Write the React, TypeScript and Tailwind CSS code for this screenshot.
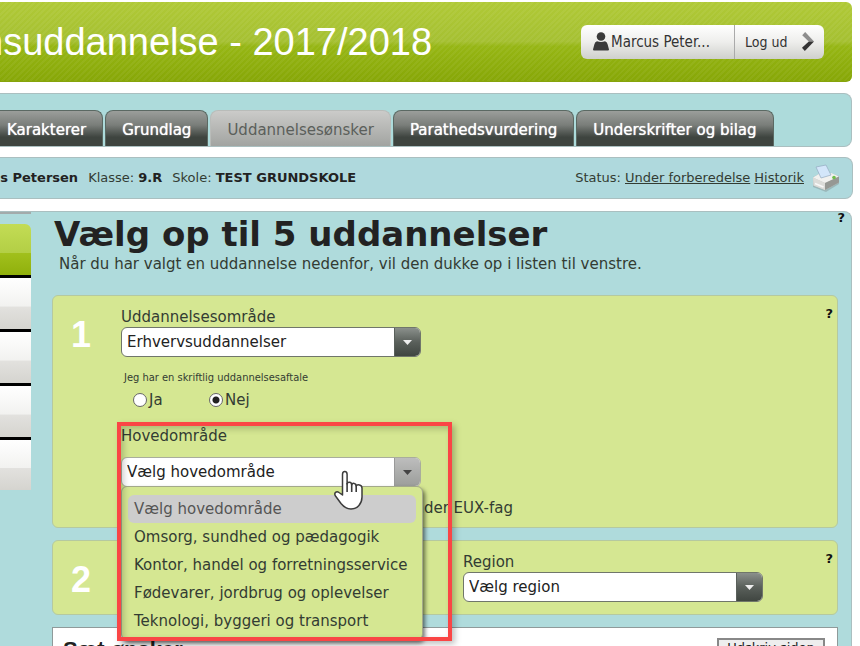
import { useState } from "react";
import type { ReactNode } from "react";

const TABS = [
  "Karakterer",
  "Grundlag",
  "Uddannelsesønsker",
  "Parathedsvurdering",
  "Underskrifter og bilag",
];

const AREAS = [
  "Vælg hovedområde",
  "Omsorg, sundhed og pædagogik",
  "Kontor, handel og forretningsservice",
  "Fødevarer, jordbrug og oplevelser",
  "Teknologi, byggeri og transport",
];

interface SelectBoxProps {
  id: string;
  options: string[];
  open?: boolean;
}

/** Drop-down with a separate arrow block on the right */
const SelectBox = ({ id, options, open = false }: SelectBoxProps) => (
  <div
    className={`grid w-[300px] h-[30px] rounded-md border overflow-hidden bg-white ${
      open ? "border-[#a9ad9c]" : "border-[#70766a]"
    }`}
  >
    <select
      id={id}
      className="col-start-1 row-start-1 w-full h-full appearance-none bg-transparent pl-[5px] pr-8 text-[15px] text-[#222] outline-none"
    >
      {options.map((option) => (
        <option key={option}>{option}</option>
      ))}
    </select>
    <span
      className={`col-start-1 row-start-1 justify-self-end w-[26px] flex items-center justify-center pointer-events-none border-l ${
        open
          ? "bg-linear-to-b from-[#bdbdbd] to-[#9c9e9b] border-[#999]"
          : "bg-linear-to-b from-[#8b908c] via-[#5a605b] to-[#404641] border-[#5a605b]"
      }`}
    >
      <svg width="9" height="5" viewBox="0 0 9 5" className={open ? "fill-[#444]" : "fill-[#eee]"}>
        <path d="M0 0h9L4.5 5z" />
      </svg>
    </span>
  </div>
);

interface StepProps {
  number: number;
  className: string;
  children: ReactNode;
}

const Step = ({ number, className, children }: StepProps) => (
  <section
    className={`relative flex bg-[#d5e792] border border-[#b5c9a0] rounded-md pt-[11px] ${className}`}
  >
    <div className="w-[68px] shrink-0 pl-[18px] pt-2 font-['Liberation_Sans',sans-serif] font-bold text-[36px] leading-10 text-white">
      {number}
    </div>
    {children}
    <HelpButton className="absolute right-1 top-2" />
  </section>
);

const HelpButton = ({ className }: { className: string }) => (
  <button
    type="button"
    aria-label="Hjælp"
    className={`font-bold text-[13px] leading-5 text-[#111] ${className}`}
  >
    ?
  </button>
);

const UserIcon = () => (
  <svg width="16" height="19" viewBox="0 0 16 19" fill="#3a3a3a">
    <circle cx="8" cy="4.5" r="4.3" />
    <path d="M4 9.2q4 1.6 8 0 2 .6 2.6 3L16 17.5q0 1-1 1H1q-1 0-1-1l1.4-5.3q.6-2.4 2.6-3z" />
  </svg>
);

const ChevronIcon = () => (
  <svg width="12" height="19" viewBox="0 0 12 19">
    <path d="M3.2 0 12 9.5H6.8L.2 3.2z" fill="#8d8d8d" />
    <path d="M12 9.5 2.8 19 0 15.8l6.8-6.3z" fill="#333" />
  </svg>
);

const PrinterIcon = () => (
  <svg width="28" height="28" viewBox="0 0 28 28">
    <path d="M1 13 12 8l15 4v8L14 28 1 23z" fill="#7e8686" opacity=".4" />
    <path d="M1 13.500 7 10l12-1 8 3.500v6L13 26 1.500 21.500z" fill="#c9cac7" />
    <path d="M1 13.500 7 10l12-1 8 3.500L13 19z" fill="#f1f1ef" />
    <path d="M4 3 14 1l5 10-10 3z" fill="#d3e6fa" stroke="#93abc0" strokeWidth=".7" />
    <path d="m1 13.500 12 5.500v7L1.500 21.500z" fill="#dcdcd9" />
    <path d="m13 19 14-6.500v6L13 26z" fill="#969894" />
    <path d="m3 19.500 8.500 3.500" stroke="#f8f8f8" strokeWidth="1.500" />
    <circle cx="22" cy="13.500" r="1.800" fill="#6fbd4c" />
  </svg>
);

const HandCursor = () => (
  <svg
    width="30"
    height="41"
    viewBox="0 0 30 41"
    className="absolute left-[281px] top-[174px] z-30 pointer-events-none"
  >
    <path
      d="M8.500 25V4.500c0-4 4.600-4 4.600 0V14c.3-2.600 4.600-2.400 4.600.8.6-2.300 4.500-1.800 4.500 1.200.8-2.100 5.800-1.400 5.800 2V27c0 6.500-4.500 12-11 12-5 0-7.500-2.500-10-5.500L1.500 26c-2-3.200 1-5.400 3.500-3.500z"
      fill="#fff"
      stroke="#3c3c3c"
      strokeWidth="1.500"
      strokeLinejoin="round"
    />
    <path d="M13.100 13v9M17.700 14v8M22.200 15v7" stroke="#3c3c3c" strokeWidth="1.600" />
  </svg>
);

const Radio = ({ label, checked, onChange }: { label: string; checked: boolean; onChange: () => void }) => (
  <label className="flex items-center gap-0.5 w-[76px] text-[15px] leading-5">
    <input
      type="radio"
      name="aftale"
      checked={checked}
      onChange={onChange}
      className="appearance-none size-[14px] rounded-full border border-[#666] bg-white checked:bg-[radial-gradient(circle,#222_3px,#fff_4px)]"
    />
    {label}
  </label>
);

const Header = () => (
  <header className="mt-0.5 mr-2 h-20 shrink-0 flex items-center justify-between rounded-r-md border-b border-[#86a40c] bg-[repeating-linear-gradient(135deg,rgba(255,255,255,0.05)_0_2px,transparent_2px_4px),linear-gradient(#b0c936_0%,#a5c032_50%,#96b614_56%,#87a707_100%)]">
    <h1 className="-ml-[18px] whitespace-nowrap font-['Liberation_Sans',sans-serif] text-[38px] leading-10 text-white">
      nsuddannelse - 2017/2018
    </h1>
    <div className="flex h-[34px] mr-7 rounded-md overflow-hidden bg-linear-to-b from-white via-[#eeeeec] to-[#cfd0cc] font-['DejaVu_Sans_Condensed','DejaVu_Sans',sans-serif] text-[#333]">
      <button type="button" className="flex items-center gap-0.5 pl-3 w-[153px] text-[15px]">
        <UserIcon />
        Marcus Peter...
      </button>
      <button
        type="button"
        className="flex items-center justify-between w-[90px] pl-2.5 pr-2.5 border-l border-[#aaa] text-[14px]"
      >
        Log ud
        <ChevronIcon />
      </button>
    </div>
  </header>
);

const App = () => {
  const [agreement, setAgreement] = useState(false);
  const [area, setArea] = useState(AREAS[0]);

  return (
    <div className="h-screen overflow-hidden flex flex-col bg-white font-['DejaVu_Sans',sans-serif] text-[15px] leading-5 text-[#333c33]">
      <Header />

      <nav className="mt-[11px] mr-2 shrink-0 pt-4 rounded-r-lg border border-l-0 border-[#aabfc0] bg-[#addbdb]">
        <div className="flex gap-0.5 -ml-[10px] whitespace-nowrap">
          {TABS.map((tab) => (
            <a
              key={tab}
              href="#"
              className={`px-4 h-9 leading-[38px] rounded-t-lg border border-b-0 ${
                tab === "Uddannelsesønsker"
                  ? "text-[#5b5f5b] border-[#b9bcb9] bg-linear-to-b from-[#cbcbc9] to-[#a2a4a1]"
                  : "text-white [text-shadow:0_0_1px_#fff] border-[#5b6963] bg-linear-to-b from-[#9b9e9b] via-[#7a7e7a] via-40% to-[#3e443f] to-75%"
              }`}
            >
              {tab}
            </a>
          ))}
        </div>
      </nav>

      <div className="mt-2.5 mr-[7px] h-[42px] shrink-0 flex items-center justify-between rounded-r-lg border border-l-0 border-[#aabfc0] bg-[#afd9dd] text-[13px] whitespace-nowrap">
        <p className="-ml-[9px] flex gap-2.5">
          <b className="text-[#222]">us Petersen</b>
          <span>
            Klasse: <b className="text-[#222]">9.R</b>
          </span>
          <span>
            Skole: <b className="text-[#222]">TEST GRUNDSKOLE</b>
          </span>
        </p>
        <div className="flex items-center gap-1 pr-3">
          <span>Status:</span>
          <a href="#" className="underline">
            Under forberedelse
          </a>
          <a href="#" className="underline">
            Historik
          </a>
          <button type="button" aria-label="Udskriv" className="ml-1">
            <PrinterIcon />
          </button>
        </div>
      </div>

      <main className="relative mt-3 mr-2 grow flex items-start rounded-tr-lg border border-l-0 border-b-0 border-[#aabfc0] bg-[#afdbdc]">
        {/* Wish list, one slot per education */}
        <ul className="w-[31px] shrink-0 border-t-2 border-[#a3abab] pt-2.5">
          <li className="h-[54px] rounded-tr-md border-b-3 border-b-black bg-[linear-gradient(#c3dc55_0%,#b3cf45_56%,#a1c01c_57%,#90b00c_100%)]" />
          {[2, 3, 4, 5].map((slot) => (
            <li
              key={slot}
              className="h-[54px] border-b-3 border-black last:h-[50px] last:border-b-0 bg-[linear-gradient(#fff_0%,#f2f2f0_55%,#e2e1de_57%,#d5d4cf_100%)]"
            />
          ))}
        </ul>

        <div className="grow pl-[21px] pr-[13px] pt-1">
          <h2 className="pl-0.5 font-bold text-[34px] leading-9 text-[#222]">Vælg op til 5 uddannelser</h2>
          <p className="pl-[7px] pt-0.5">
            Når du har valgt en uddannelse nedenfor, vil den dukke op i listen til venstre.
          </p>

          <Step number={1} className="mt-[21px] pb-[9px]">
            <div className="flex flex-col">
              <label htmlFor="omraade">Uddannelsesområde</label>
              <SelectBox id="omraade" options={["Erhvervsuddannelser"]} />
              <fieldset className="mt-[13px]">
                <legend className="pl-[3px] font-['DejaVu_Sans_Condensed','DejaVu_Sans',sans-serif] text-[11px] leading-4">
                  Jeg har en skriftlig uddannelsesaftale
                </legend>
                <div className="flex pl-3 mt-1">
                  <Radio label="Ja" checked={agreement} onChange={() => setAgreement(true)} />
                  <Radio label="Nej" checked={!agreement} onChange={() => setAgreement(false)} />
                </div>
              </fieldset>
              <label htmlFor="hovedomraade" className="mt-4 mb-[11px]">
                Hovedområde
              </label>
              <SelectBox id="hovedomraade" options={[area]} open />
              <p className="mt-[11px] self-end -mr-[92px]">under EUX-fag</p>
            </div>

            {/* Open list under the Hovedområde field */}
            <ul
              role="listbox"
              className="absolute z-10 left-[68px] top-[190px] w-[302px] px-1.5 pt-2 pb-1 rounded-md border border-[#a3a98a] bg-[#d5e792] shadow-[2px_3px_4px_rgba(0,0,0,0.55)]"
            >
              {AREAS.map((option) => (
                <li key={option} role="option" aria-selected={option === area}>
                  <button
                    type="button"
                    onClick={() => setArea(option)}
                    className={`w-full h-7 pl-1.5 rounded-md text-left whitespace-nowrap ${
                      option === area ? "bg-[#cdcdcd] text-[#555]" : ""
                    }`}
                  >
                    {option}
                  </button>
                </li>
              ))}
            </ul>
            <div className="absolute z-20 left-16 top-[126px] w-[335px] h-[219px] border-4 border-[#fa4545] shadow-[3px_3px_6px_rgba(0,0,0,0.25),inset_3px_3px_6px_rgba(0,0,0,0.2)] pointer-events-none" />
            <HandCursor />
          </Step>

          <Step number={2} className="mt-3 pb-3">
            <div className="flex flex-col ml-[342px]">
              <label htmlFor="region">Region</label>
              <SelectBox id="region" options={["Vælg region"]} />
            </div>
          </Step>

          <section className="mt-3 h-20 flex items-start justify-between pt-2.5 pl-2.5 pr-3 border border-[#8f9a9a] bg-white">
            <h3 className="font-['Liberation_Sans',sans-serif] font-bold text-[22px] leading-6 text-[#222]">
              Sæt ønsker
            </h3>
            <button
              type="button"
              className="w-[108px] border-2 border-[#888] bg-[#eee] text-[13px] leading-4 text-[#222]"
            >
              Udskriv siden
            </button>
          </section>
        </div>

        <HelpButton className="absolute right-1.5 -top-1" />
      </main>
    </div>
  );
};

export default App;
